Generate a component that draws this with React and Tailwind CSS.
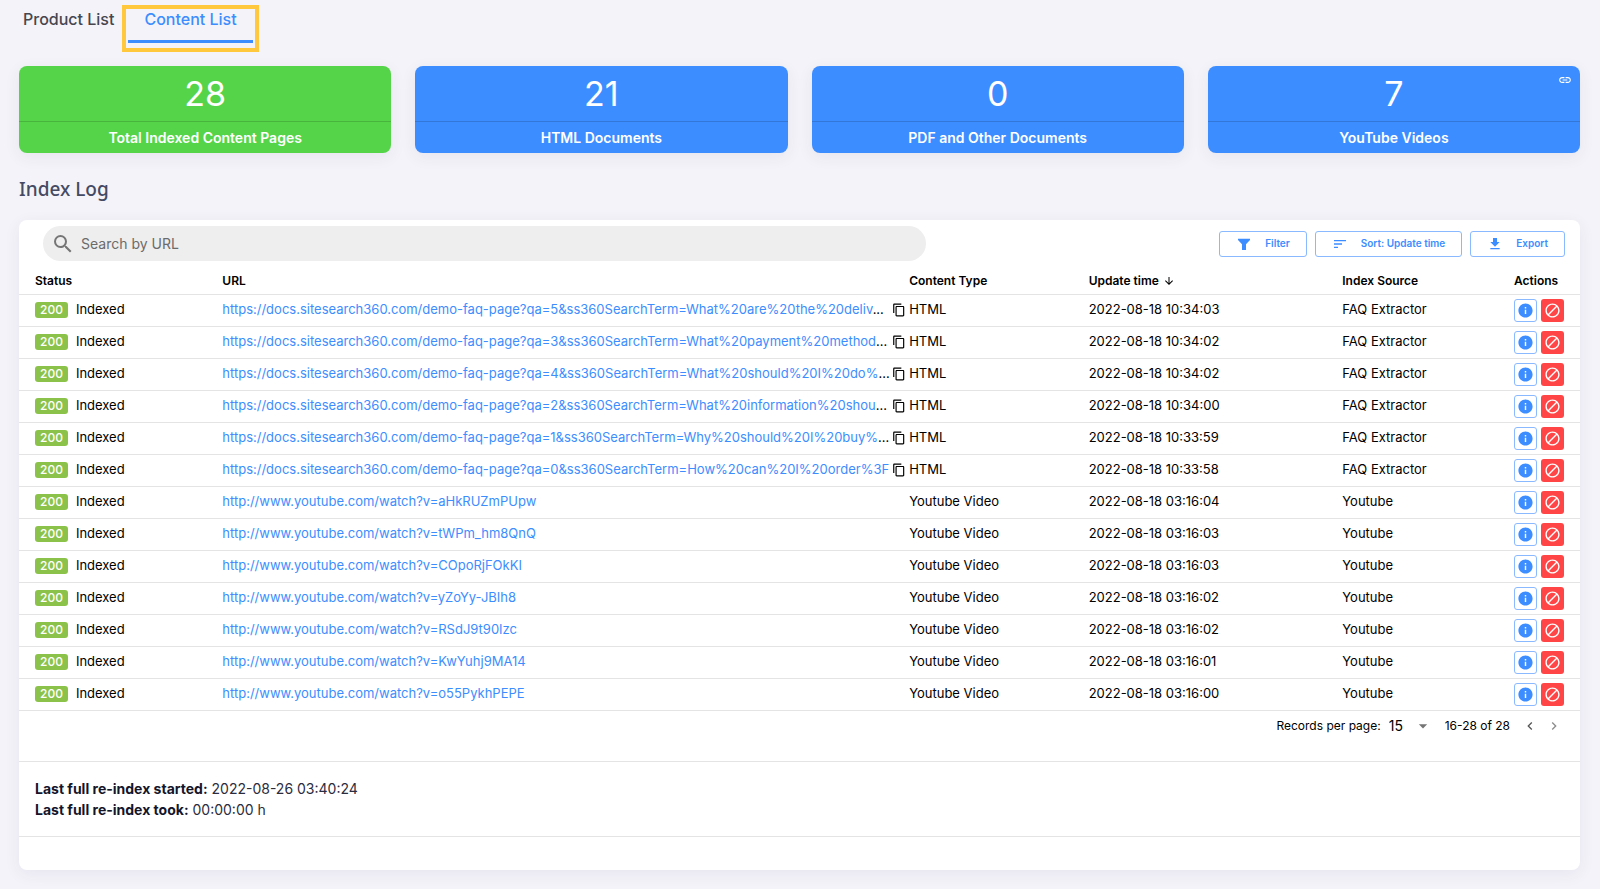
import React, { useState } from "react";
import {
  MdArrowDownward,
  MdArrowDropDown,
  MdBlock,
  MdChevronLeft,
  MdChevronRight,
  MdContentCopy,
  MdDownload,
  MdInfo,
  MdLink,
  MdSearch,
  MdSort,
} from "react-icons/md";

const DOCS_URL = "https://docs.sitesearch360.com/demo-faq-page?qa=";
const VIDEO_URL = "http://www.youtube.com/watch?v=";

const stats = [
  { value: 28, label: "Total Indexed Content Pages", color: "bg-[#55d449]" },
  { value: 21, label: "HTML Documents", color: "bg-[#3c8dff]" },
  { value: 0, label: "PDF and Other Documents", color: "bg-[#3c8dff]" },
  { value: 7, label: "YouTube Videos", color: "bg-[#3c8dff]", linked: true },
];

// path, update time, long (shown shortened)
const pages = [
  ["5&ss360SearchTerm=What%20are%20the%20deliv", "2022-08-18 10:34:03", true],
  ["3&ss360SearchTerm=What%20payment%20method", "2022-08-18 10:34:02", true],
  ["4&ss360SearchTerm=What%20should%20I%20do%", "2022-08-18 10:34:02", true],
  ["2&ss360SearchTerm=What%20information%20shou", "2022-08-18 10:34:00", true],
  ["1&ss360SearchTerm=Why%20should%20I%20buy%", "2022-08-18 10:33:59", true],
  ["0&ss360SearchTerm=How%20can%20I%20order%3F", "2022-08-18 10:33:58", false],
];

const videos = [
  ["aHkRUZmPUpw", "2022-08-18 03:16:04"],
  ["tWPm_hm8QnQ", "2022-08-18 03:16:03"],
  ["COpoRjFOkKI", "2022-08-18 03:16:03"],
  ["yZoYy-JBIh8", "2022-08-18 03:16:02"],
  ["RSdJ9t90Izc", "2022-08-18 03:16:02"],
  ["KwYuhj9MA14", "2022-08-18 03:16:01"],
  ["o55PykhPEPE", "2022-08-18 03:16:00"],
];

const rows = [
  ...pages.map(([path, time, long]) => ({
    url: DOCS_URL + path,
    type: "HTML",
    time,
    source: "FAQ Extractor",
    copy: true,
    long,
  })),
  ...videos.map(([id, time]) => ({
    url: VIDEO_URL + id,
    type: "Youtube Video",
    time,
    source: "Youtube",
  })),
];

const FilterIcon = ({ className }) => (
  <svg viewBox="0 0 24 24" fill="currentColor" className={className}>
    <path d="M3 4h18v2l-6 6.500V21H9v-8.500L3 6z" />
  </svg>
);

const StatCard = ({ value, label, color, linked }) => (
  <div
    className={`relative flex-1 rounded-lg text-center text-white shadow-[0_4px_16px_rgba(60,60,110,0.07)] ${color}`}
  >
    <div className="h-14 border-b border-black/15 text-[34px] leading-[56px]">{value}</div>
    <div className="h-[31px] text-sm leading-[31px] font-semibold">{label}</div>
    {linked && (
      <a href="#videos" aria-label="Open YouTube videos" className="absolute top-[7px] right-2">
        <MdLink className="h-3.5 w-3.5" />
      </a>
    )}
  </div>
);

const ToolbarButton = ({ icon: Icon, children }) => (
  <button
    type="button"
    className="flex h-[26px] items-center gap-[13px] rounded-[3px] border border-[#8ab9ff] px-4 text-[10px] font-semibold text-[#3c8dff]"
  >
    <Icon className="h-4 w-4" />
    {children}
  </button>
);

const App = () => {
  const [tab, setTab] = useState("content");
  const [search, setSearch] = useState("");

  return (
    <div className="min-h-screen bg-[#f4f3f9] pr-5 pb-5 pl-[19px] font-['Inter',sans-serif] text-[13px] text-black">
      <nav className="flex h-[66px] items-start gap-1 pt-[5px]">
        <button
          type="button"
          onClick={() => setTab("product")}
          className="h-7 px-1 text-base font-medium text-[#46464f]"
        >
          Product List
        </button>
        <div className="border-4 border-[#ffc83d] px-[2px] pb-[5px]">
          <button
            type="button"
            onClick={() => setTab("content")}
            className={`block h-[34px] border-b-[3px] px-4 pb-[10px] text-base leading-[21px] font-medium text-[#3c8dff] ${
              tab === "content" ? "border-[#3c8dff]" : "border-transparent"
            }`}
          >
            Content List
          </button>
        </div>
      </nav>

      <section className="flex gap-6">
        {stats.map((stat) => (
          <StatCard key={stat.label} {...stat} />
        ))}
      </section>

      <h2 className="flex h-[67px] items-center pt-1.5 font-['Noto_Sans',sans-serif] text-[19px] font-medium text-[#454a63]">
        Index Log
      </h2>

      <main className="rounded-lg bg-white shadow-[0_4px_16px_rgba(60,60,110,0.07)]">
        <div className="flex items-center gap-2 py-1.5 pr-[15px] pl-6">
          <label className="flex h-[35px] w-[58%] items-center gap-1.5 rounded-full bg-[#eeeeee] px-2">
            <MdSearch className="h-6 w-6 text-[#757575]" />
            <input
              type="text"
              aria-label="Search by URL"
              placeholder="Search by URL"
              value={search}
              onChange={(e) => setSearch(e.target.value)}
              className="flex-1 bg-transparent text-sm outline-none placeholder:text-[#6b6b6b]"
            />
          </label>
          <div className="ml-auto flex gap-2">
            <ToolbarButton icon={FilterIcon}>Filter</ToolbarButton>
            <ToolbarButton icon={MdSort}>Sort: Update time</ToolbarButton>
            <ToolbarButton icon={MdDownload}>Export</ToolbarButton>
          </div>
        </div>

        <table className="w-full table-fixed border-collapse text-left">
          <thead>
            <tr className="h-[27px] border-b border-[#e4e4e4] text-xs *:pt-0.5 *:pl-4 *:font-semibold">
              <th className="w-[12%]">Status</th>
              <th className="w-[44%]">URL</th>
              <th className="w-[11.5%]">Content Type</th>
              <th>
                <span className="flex items-center gap-1">
                  Update time
                  <MdArrowDownward className="h-3 w-3" />
                </span>
              </th>
              <th className="w-[11%]">Index Source</th>
              <th className="w-[82px]">Actions</th>
            </tr>
          </thead>
          <tbody>
            {rows.map((row) => (
              <tr key={row.url} className="h-8 border-b border-[#e4e4e4] *:pl-4">
                <td>
                  <span className="mr-2 inline-block h-4 rounded-[3px] bg-[#8bc34a] px-[5px] text-xs leading-4 font-medium text-white">
                    200
                  </span>
                  Indexed
                </td>
                <td>
                  <div className="flex items-center whitespace-nowrap">
                    <span className={row.copy ? "min-w-[670px] shrink-0" : ""}>
                      <a href={row.url} className="text-[#3c8dff]">
                        {row.url}
                      </a>
                      {row.long && "..."}
                    </span>
                    {row.copy && (
                      <button type="button" aria-label="Copy URL" className="shrink-0">
                        <MdContentCopy className="h-3.5 w-3.5" />
                      </button>
                    )}
                  </div>
                </td>
                <td>{row.type}</td>
                <td>{row.time}</td>
                <td>{row.source}</td>
                <td>
                  <div className="flex gap-1">
                    <button
                      type="button"
                      aria-label="Details"
                      className="flex h-[23px] w-[23px] shrink-0 items-center justify-center rounded-[3px] border border-[#8ab9ff] text-[#3c8dff]"
                    >
                      <MdInfo className="h-[17px] w-[17px]" />
                    </button>
                    <button
                      type="button"
                      aria-label="Block"
                      className="flex h-[23px] w-[23px] shrink-0 items-center justify-center rounded-[3px] bg-[#ff4545] text-white"
                    >
                      <MdBlock className="h-[17px] w-[17px]" />
                    </button>
                  </div>
                </td>
              </tr>
            ))}
          </tbody>
        </table>

        <div className="flex h-[51px] items-start justify-end border-b border-[#e4e4e4] pt-[3px] pr-[18px] text-xs">
          <div className="flex h-6 items-center">
            <label htmlFor="per-page">Records per page:</label>
            <div className="relative ml-2 flex items-center">
              <select id="per-page" defaultValue="15" className="w-11 appearance-none text-sm">
                <option>15</option>
                <option>30</option>
              </select>
              <MdArrowDropDown className="pointer-events-none absolute right-0 h-5 w-5 text-[#757575]" />
            </div>
            <span className="ml-3">16-28 of 28</span>
            <button type="button" aria-label="Previous page" className="ml-3">
              <MdChevronLeft className="h-4 w-4 text-[#555555]" />
            </button>
            <button type="button" aria-label="Next page" disabled className="ml-2">
              <MdChevronRight className="h-4 w-4 text-[#8c8c8c]" />
            </button>
          </div>
        </div>

        <div className="border-b border-[#e4e4e4] px-4 py-4 text-sm leading-[21px] text-[#2b2c3d]">
          <p>
            <b className="font-bold text-[#14152b]">Last full re-index started:</b> 2022-08-26
            03:40:24
          </p>
          <p>
            <b className="font-bold text-[#14152b]">Last full re-index took:</b> 00:00:00 h
          </p>
        </div>
        <div className="h-[33px]" />
      </main>
    </div>
  );
};

export default App;
